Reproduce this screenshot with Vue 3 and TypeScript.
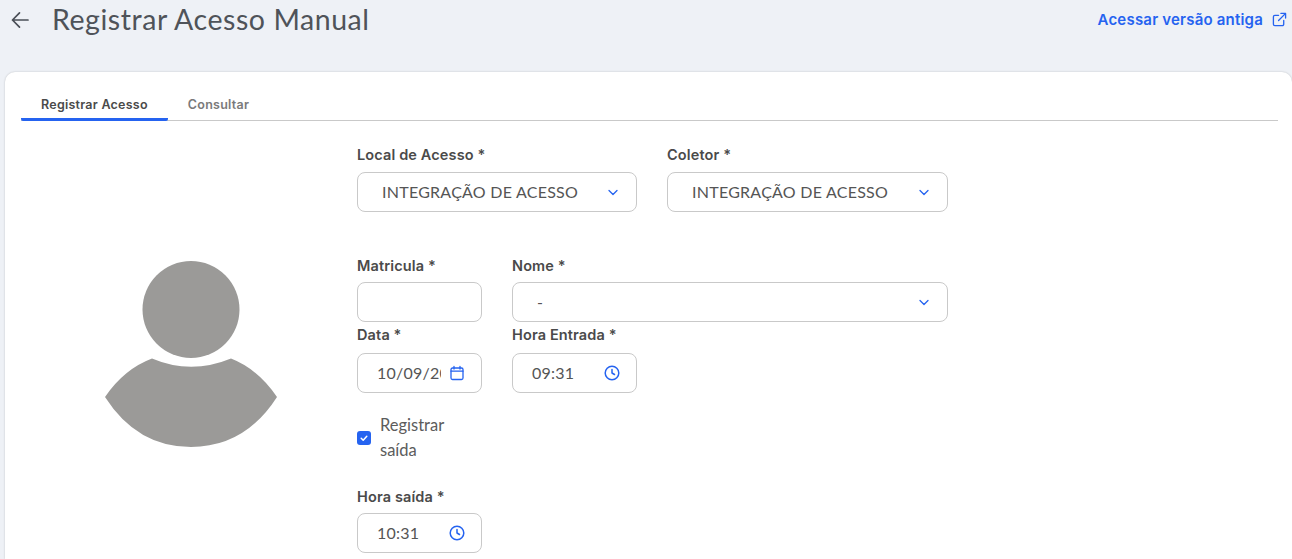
<script setup lang="ts">
const sel = 'INTEGRAÇÃO DE ACESSO'
</script>

<template>
  <div class="page">
    <header class="head">
      <div class="head-left">
        <svg class="back" width="20" height="20" viewBox="0 0 20 20" fill="none" stroke="#4a4f57" stroke-width="1.7" stroke-linecap="round" stroke-linejoin="round"><path d="M18 10H2.500M9.500 2.800L2.500 10l7 7.200"/></svg>
        <h1>Registrar Acesso Manual</h1>
      </div>
      <a class="old">
        <span>Acessar versão antiga</span>
        <svg width="15" height="15" viewBox="0 0 16 16" fill="none" stroke="#2563f0" stroke-width="1.4" stroke-linecap="round" stroke-linejoin="round"><path d="M7 3.500H3a1.500 1.500 0 0 0-1.500 1.500v8A1.500 1.500 0 0 0 3 14.500h8a1.500 1.500 0 0 0 1.500-1.500V9M9.500 1.500h5v5M14.500 1.500L7 9"/></svg>
      </a>
    </header>

    <section class="card">
      <nav class="tabs">
        <button class="tab active">Registrar Acesso</button>
        <button class="tab">Consultar</button>
      </nav>

      <div class="body">
        <div class="photo">
          <svg width="172" height="187" viewBox="105 261 172 187">
            <circle cx="191" cy="309.500" r="48.500" fill="#9b9a98"/>
            <path d="M152 358.500Q191 375 231 358.500Q258 369 277 397Q245 447 191 447Q137 447 105 397Q124 369 152 358.500Z" fill="#9b9a98"/>
          </svg>
        </div>

        <form class="form" @submit.prevent>
          <div class="grid row1">
            <div class="field w2">
              <label>Local de Acesso *</label>
              <div class="box select"><span class="txt">{{ sel }}</span>
                <svg class="chev" width="12" height="12" viewBox="0 0 12 12" fill="none" stroke="#2563f0" stroke-width="1.300" stroke-linecap="round" stroke-linejoin="round"><path d="M2 4.500l4 4 4-4"/></svg>
              </div>
            </div>
            <div class="field">
              <label>Coletor *</label>
              <div class="box select"><span class="txt">{{ sel }}</span>
                <svg class="chev" width="12" height="12" viewBox="0 0 12 12" fill="none" stroke="#2563f0" stroke-width="1.300" stroke-linecap="round" stroke-linejoin="round"><path d="M2 4.500l4 4 4-4"/></svg>
              </div>
            </div>
          </div>

          <div class="grid row2">
            <div class="field">
              <label>Matricula *</label>
              <div class="box"></div>
            </div>
            <div class="field w2">
              <label>Nome *</label>
              <div class="box select"><span class="txt">-</span>
                <svg class="chev" width="12" height="12" viewBox="0 0 12 12" fill="none" stroke="#2563f0" stroke-width="1.300" stroke-linecap="round" stroke-linejoin="round"><path d="M2 4.500l4 4 4-4"/></svg>
              </div>
            </div>
          </div>

          <div class="grid row3">
            <div class="field">
              <label>Data *</label>
              <div class="box value">
                <input class="date txt" type="text" value="10/09/2025" readonly />
                <svg width="16" height="16" viewBox="0 0 16 16" fill="none" stroke="#2563f0" stroke-width="1.300" stroke-linecap="round" stroke-linejoin="round"><rect x="2" y="3" width="12" height="11.500" rx="1.500"/><path d="M2 6.200h12M5 1.500V4M11 1.500V4"/></svg>
              </div>
            </div>
            <div class="field">
              <label>Hora Entrada *</label>
              <div class="box value">
                <span class="time txt">09:31</span>
                <svg width="16" height="16" viewBox="0 0 16 16" fill="none" stroke="#2563f0" stroke-width="1.500" stroke-linecap="round" stroke-linejoin="round"><circle cx="8" cy="8" r="6.800"/><path d="M8 4.500V8l2.500 1.500"/></svg>
              </div>
            </div>
          </div>

          <div class="check">
            <span class="tick">
              <svg width="10" height="10" viewBox="0 0 10 10" fill="none" stroke="#fff" stroke-width="1.500" stroke-linecap="round" stroke-linejoin="round"><path d="M2.200 5.200l2 2 3.600-4"/></svg>
            </span>
            <span class="check-text">Registrar saída</span>
          </div>

          <div class="field exit">
            <label>Hora saída *</label>
            <div class="box value">
              <span class="time txt">10:31</span>
              <svg width="16" height="16" viewBox="0 0 16 16" fill="none" stroke="#2563f0" stroke-width="1.500" stroke-linecap="round" stroke-linejoin="round"><circle cx="8" cy="8" r="6.800"/><path d="M8 4.500V8l2.500 1.500"/></svg>
            </div>
          </div>
        </form>
      </div>
    </section>
  </div>
</template>

<style>
html, body { margin: 0; height: 100%; overflow: hidden; background: #eef1f6; }
</style>

<style scoped>
.page {
  width: 1292px;
  height: 559px;
  overflow: hidden;
  background: #eef1f6;
  font-family: "Lato", "Open Sans", sans-serif;
  color: #4a4a4a;
  padding-left: 5px;
  box-sizing: border-box;
}
.head {
  height: 72px;
  display: flex;
  justify-content: space-between;
  align-items: flex-start;
  box-sizing: border-box;
  padding: 0 5px 0 5px;
}
.head-left { display: flex; align-items: center; height: 38px; }
.back { margin-right: 22px; margin-top: 2px; }
h1 {
  margin: 0;
  font-size: 28.500px;
  font-weight: 400;
  color: #4f5359;
  letter-spacing: 0.55px;
  line-height: 38px;
}
.old {
  display: flex;
  align-items: center;
  gap: 9px;
  height: 38px;
  font-family: "Inter", sans-serif;
  font-size: 15px;
  font-weight: 600;
  letter-spacing: 0.2px;
  color: #2563f0;
}
.card {
  background: #fff;
  border-radius: 10px 10px 0 0;
  box-shadow: 0 0 2px rgba(0, 0, 0, 0.22);
  height: 487px;
  padding: 0 14px 0 16px;
  box-sizing: border-box;
}
.tabs {
  display: flex;
  height: 49px;
  box-sizing: border-box;
  align-items: flex-end;
  border-bottom: 1px solid #c9c9c9;
}
.tab {
  border: 0;
  background: none;
  padding: 2px 20px 0;
  height: 33px;
  margin-bottom: -1px;
  font-family: "Inter", sans-serif;
  font-size: 12.500px;
  font-weight: 600;
  letter-spacing: 0.25px;
  color: #7a7a7a;
  border-bottom: 3px solid transparent;
  border-radius: 2px;
  box-sizing: border-box;
}
.tab.active {
  color: #4a4a4a;
  border-bottom-color: #2563f0;
}
.body { display: flex; }
.photo {
  width: 336px;
  flex: none;
  padding-top: 140px;
  padding-left: 84px;
  box-sizing: border-box;
}
.form { width: 591px; padding-top: 23px; }
.grid {
  display: grid;
  grid-template-columns: 125px 125px 281px;
  column-gap: 30px;
}
.row1 .w2 { grid-column: span 2; }
.row2 { margin-top: 43px; }
.row2 .w2 { grid-column: span 2; }
.row3 { margin-top: 1px; }
.field label {
  display: block;
  font-family: "Inter", sans-serif;
  font-size: 14.500px;
  font-weight: 600;
  letter-spacing: 0.13px;
  line-height: 20px;
  padding-top: 1px;
  color: #4a4a4a;
}
.row1 label { margin-bottom: 7px; }
.row2 label { margin-bottom: 6px; }
.row3 label { margin-top: 1px; margin-bottom: 8px; }
.exit label { margin-bottom: 6px; }
.box {
  height: 40px;
  border: 1px solid #c9c9c9;
  border-radius: 8px;
  box-sizing: border-box;
  background: #fff;
  display: flex;
  align-items: center;
  font-size: 16px;
  color: #555;
}
.txt { margin-bottom: 2px; letter-spacing: 0.25px; }
.select { padding: 0 17px 0 24px; justify-content: space-between; }
.value { padding: 0 16px 0 19px; justify-content: space-between; }
.date {
  width: 64px;
  padding: 0;
  border: 0;
  outline: 0;
  background: none;
  font: inherit;
  color: inherit;
}
.check {
  display: flex;
  align-items: center;
  width: 125px;
  margin-top: 20px;
  gap: 9px;
}
.tick {
  width: 14px;
  height: 14px;
  flex: none;
  background: #2563f0;
  border-radius: 3px;
  display: flex;
  align-items: center;
  justify-content: center;
  margin-top: -1px;
}
.check-text {
  width: 80px;
  font-size: 16.500px;
  line-height: 25px;
  color: #5c5c5c;
}
.exit { width: 125px; margin-top: 23px; }
</style>
